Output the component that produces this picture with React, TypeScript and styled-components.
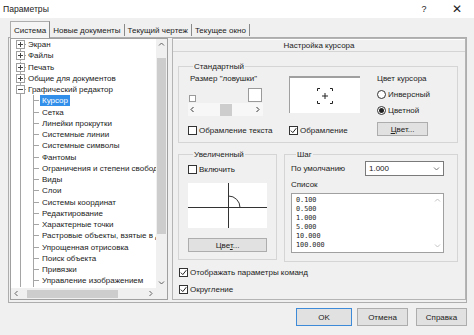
import React from "react";
import styled, { createGlobalStyle } from "styled-components";

const GlobalStyle = createGlobalStyle`
  html, body {
    margin: 0;
    padding: 0;
    background: #f0f0f0;
  }
  body {
    font-family: "Liberation Sans", Arial, sans-serif;
    font-size: 8px;
    color: #222;
  }
`;

const Window = styled.div`
  width: 474px;
  height: 335px;
  display: flex;
  flex-direction: column;
  background: #f0f0f0;
  overflow: hidden;
`;

const TitleBar = styled.div`
  height: 18px;
  flex: none;
  background: #fff;
  display: flex;
  align-items: center;
  padding-left: 3px;
  font-size: 8.6px;
`;

const TitleText = styled.div`
  flex: 1;
`;

const TitleButton = styled.div<{ $w: number }>`
  width: ${({ $w }) => $w}px;
  text-align: center;
  font-size: ${({ $w }) => ($w > 32 ? 12 : 9)}px;
  color: #222;
`;

const Body = styled.div`
  flex: 1;
  display: flex;
  flex-direction: column;
  padding: 3px 7px 0 8px;
`;

const Tabs = styled.div`
  height: 16px;
  display: flex;
  align-items: stretch;
  padding-left: 2px;
`;

const Tab = styled.div<{ $active?: boolean }>`
  display: flex;
  align-items: center;
  padding: 0 3px;
  margin-top: ${({ $active }) => ($active ? 0 : 3)}px;
  margin-bottom: ${({ $active }) => ($active ? -1 : 1)}px;
  border-right: 1px solid #8a8a8a;
  border-left: ${({ $active }) => ($active ? "1px solid #adadad" : "none")};
  border-top: ${({ $active }) => ($active ? "1px solid #adadad" : "none")};
  background: ${({ $active }) => ($active ? "#f5f5f5" : "transparent")};
  position: relative;
  z-index: ${({ $active }) => ($active ? 1 : 0)};
`;

const TabPage = styled.div`
  height: 266px;
  box-sizing: border-box;
  border: 1px solid #adadad;
  display: flex;
  gap: 4px;
  padding: 0 0 2px 1px;
`;

const TreeBox = styled.div`
  width: 158px;
  box-sizing: border-box;
  border: 1px solid #a0a0a0;
  background: #fff;
  display: grid;
  grid-template-columns: 1fr 11px;
  grid-template-rows: 1fr 11px;
  overflow: hidden;
`;

const TreeList = styled.div`
  overflow: hidden;
`;

const TreeRow = styled.div`
  height: 11.25px;
  display: flex;
  align-items: center;
  white-space: nowrap;
`;

const line = "linear-gradient(#a5a5a5, #a5a5a5)";

const RootConnector = styled.span<{ $first?: boolean }>`
  width: 15px;
  height: 100%;
  flex: none;
  display: flex;
  align-items: center;
  background-image: ${line}, ${line};
  background-repeat: no-repeat;
  background-size: 1px ${({ $first }) => ($first ? "50%" : "100%")}, 6px 1px;
  background-position: 9px 100%, 9px 50%;
`;

const ChildConnector = styled.span`
  width: 29px;
  height: 100%;
  flex: none;
  background-image: ${line}, ${line}, ${line};
  background-repeat: no-repeat;
  background-size: 1px 100%, 1px 100%, 6px 1px;
  background-position: 9px 0, 22px 0, 22px 50%;
`;

const TreeLabel = styled.span<{ $selected?: boolean }>`
  padding: 0 2px;
  line-height: 11px;
  height: 11px;
  background: ${({ $selected }) => ($selected ? "#3390ea" : "transparent")};
  color: ${({ $selected }) => ($selected ? "#fff" : "#222")};
`;

const ExpanderBox = styled.span`
  margin-left: 5px;
  display: flex;
`;

const VScroll = styled.div`
  background: #f0f0f0;
  display: flex;
  flex-direction: column;
  align-items: center;
`;

const HScroll = styled.div`
  background: #f0f0f0;
  display: flex;
  align-items: center;
`;

const ArrowCell = styled.div<{ $size: number }>`
  width: ${({ $size }) => $size}px;
  height: ${({ $size }) => $size}px;
  flex: none;
  display: flex;
  align-items: center;
  justify-content: center;
`;

const VTrack = styled.div`
  flex: 1;
  width: 100%;
  display: flex;
  justify-content: center;
`;

const VThumb = styled.div`
  width: 9px;
  height: 176px;
  margin-top: 8px;
  background: #cdcdcd;
`;

const HTrack = styled.div`
  flex: 1;
  height: 100%;
  display: flex;
  align-items: center;
`;

const HThumb = styled.div`
  height: 8px;
  width: 91px;
  margin-left: 5px;
  background: #cdcdcd;
`;

const Corner = styled.div`
  background: #f0f0f0;
`;

const RightPanel = styled.div`
  flex: 1;
  box-sizing: border-box;
  border: 1px solid #b4b4b4;
  display: flex;
  flex-direction: column;
`;

const PanelHeader = styled.div`
  height: 12px;
  display: flex;
  align-items: center;
  justify-content: center;
  border-bottom: 1px solid #d4d4d4;
  box-shadow: inset 0 1px 0 #fff;
`;

const PanelContent = styled.div`
  flex: 1;
  display: flex;
  flex-direction: column;
  padding: 9px 7px 0 5px;
`;

const Group = styled.fieldset`
  margin: 0;
  padding: 0 0 0 9px;
  border: 1px solid #d5d5d5;
  min-width: 0;
`;

const GroupTitle = styled.legend`
  padding: 0 1px;
  margin-left: 5px;
  line-height: 11px;
`;

const StandardGrid = styled.div`
  display: grid;
  grid-template-columns: 101px 88px 1fr;
  grid-template-rows: 42px 12px;
  row-gap: 10px;
  padding-top: 2px;
  height: 68px;
`;

const Cell = styled.div<{ $col: number; $row: number; $span?: number }>`
  grid-column: ${({ $col }) => $col};
  grid-row: ${({ $row, $span }) => `${$row} / span ${$span ?? 1}`};
  display: flex;
  flex-direction: column;
  gap: ${({ $span }) => ($span ? 7 : 0)}px;
`;

const SmallLabel = styled.div<{ $indent?: number }>`
  line-height: 9px;
  padding-left: ${({ $indent }) => $indent ?? 0}px;
`;

const SizeRow = styled.div`
  width: 75px;
  height: 14px;
  margin-top: 5px;
  display: flex;
  align-items: flex-end;
  justify-content: space-between;
  padding: 0 1px;
  box-sizing: border-box;
`;

const SizeSquare = styled.div<{ $size: number }>`
  width: ${({ $size }) => $size}px;
  height: ${({ $size }) => $size}px;
  box-sizing: border-box;
  border: 1px solid #9a9a9a;
  background: #fff;
`;

const Slider = styled.div`
  width: 75px;
  height: 13px;
  margin-top: 1px;
  display: flex;
  align-items: center;
  background: #f7f7f7;
`;

const SliderThumb = styled.div`
  width: 12px;
  height: 12px;
  margin: 0 21px 0 23px;
  background: #cdcdcd;
`;

const Preview = styled.div`
  width: 71px;
  height: 37px;
  margin-top: 2px;
  box-sizing: border-box;
  background: #fff;
  border-top: 2px solid #a0a0a0;
  border-left: 1px solid #a0a0a0;
  display: flex;
  align-items: center;
  justify-content: center;
`;

const CheckRow = styled.label`
  display: flex;
  align-items: center;
  gap: 2px;
  line-height: 9px;
  white-space: nowrap;
`;

const CheckBox = styled.span`
  width: 9px;
  height: 9px;
  box-sizing: border-box;
  border: 1px solid #333;
  background: #fff;
  display: flex;
  align-items: center;
  justify-content: center;
  flex: none;
`;

const Radio = styled.span<{ $on?: boolean }>`
  width: 9px;
  height: 9px;
  box-sizing: border-box;
  border: 1px solid #333;
  border-radius: 50%;
  background: #fff;
  flex: none;
  display: flex;
  align-items: center;
  justify-content: center;
  &::after {
    content: "";
    width: 5px;
    height: 5px;
    border-radius: 50%;
    background: ${({ $on }) => ($on ? "#222" : "transparent")};
  }
`;

const Button = styled.div<{ $w: number; $primary?: boolean }>`
  width: ${({ $w }) => $w}px;
  height: 14px;
  box-sizing: border-box;
  border: 1px solid ${({ $primary }) => ($primary ? "#3c8ad8" : "#adadad")};
  background: #e1e1e1;
  display: flex;
  align-items: center;
  justify-content: center;
  line-height: 9px;
`;

const GroupsRow = styled.div`
  display: flex;
  gap: 7px;
  margin-top: 6px;
`;

const ZoomGroup = styled(Group)`
  width: 99px;
  box-sizing: border-box;
  height: 111px;
`;

const StepGroup = styled(Group)`
  flex: 1;
  height: 111px;
  padding: 0 13px 0 6px;
`;

const ZoomBody = styled.div`
  display: flex;
  flex-direction: column;
  padding-top: 5px;
`;

const DrawingBox = styled.div`
  width: 79px;
  height: 45px;
  margin: 9px 0 10px;
  background: #fff;
  display: flex;
`;

const StepRow = styled.div`
  display: flex;
  align-items: center;
  justify-content: space-between;
  margin-top: 1px;
`;

const Dropdown = styled.div`
  width: 79px;
  height: 15px;
  box-sizing: border-box;
  border: 1px solid #7a7a7a;
  background: #fff;
  display: flex;
  align-items: center;
  padding-left: 3px;
`;

const DropValue = styled.span`
  flex: 1;
`;

const ListLabel = styled(SmallLabel)`
  margin-top: 4px;
`;

const ListBox = styled.div`
  height: 60px;
  margin-top: 4px;
  box-sizing: border-box;
  border: 1px solid #a0a0a0;
  background: #fff;
  display: flex;
`;

const ListItems = styled.div`
  flex: 1;
  padding: 2px 0 0 4px;
  font-family: "DejaVu Sans Mono", "Liberation Mono", monospace;
  font-size: 6.8px;
  line-height: 9px;
`;

const ListScroll = styled.div`
  width: 11px;
  display: flex;
  flex-direction: column;
  justify-content: space-between;
  align-items: center;
  padding: 3px 0;
`;

const BottomChecks = styled.div`
  display: flex;
  flex-direction: column;
  gap: 8px;
  margin-top: 6px;
  padding-left: 1px;
`;

const ButtonRow = styled.div`
  display: flex;
  justify-content: flex-end;
  gap: 5px;
  margin-top: 5px;
  & > :last-child {
    margin-left: 3px;
  }
`;

const DialogButton = styled(Button)`
  height: 18px;
`;

type Dir = "up" | "down" | "left" | "right";

const chevronPaths: Record<Dir, string> = {
  up: "M1 4.5 L3.5 2 L6 4.5",
  down: "M1 2.5 L3.5 5 L6 2.5",
  left: "M4.5 1 L2 3.5 L4.5 6",
  right: "M2.5 1 L5 3.5 L2.5 6",
};

const Chevron = ({ dir, color = "#606060" }: { dir: Dir; color?: string }) => (
  <svg width="7" height="7" viewBox="0 0 7 7">
    <path d={chevronPaths[dir]} fill="none" stroke={color} strokeWidth="1" />
  </svg>
);

const Expander = ({ open }: { open?: boolean }) => (
  <svg width="9" height="9" viewBox="0 0 9 9">
    <rect x="0.5" y="0.5" width="8" height="8" fill="#fff" stroke="#a0a0a0" />
    <path d="M2 4.5 H7" stroke="#444" />
    {!open && <path d="M4.5 2 V7" stroke="#444" />}
  </svg>
);

const Tick = () => (
  <svg width="7" height="7" viewBox="0 0 7 7">
    <path d="M0.8 3.6 L2.8 5.6 L6.3 1.2" fill="none" stroke="#222" strokeWidth="1" />
  </svg>
);

const Check = ({ checked, children }: { checked?: boolean; children: React.ReactNode }) => (
  <CheckRow>
    <CheckBox>{checked && <Tick />}</CheckBox>
    <span>{children}</span>
  </CheckRow>
);

const Crosshair = () => (
  <svg width="16" height="16" viewBox="0 0 16 16">
    <path
      d="M0.5 3 V0.5 H3 M13 0.5 H15.5 V3 M15.5 13 V15.5 H13 M3 15.5 H0.5 V13 M8 5 V11 M5 8 H11"
      fill="none"
      stroke="#222"
      strokeWidth="1"
    />
  </svg>
);

const ZoomDrawing = () => (
  <svg width="79" height="45" viewBox="0 0 79 45">
    <path d="M40.5 0 V45 M0 24.5 H79" stroke="#333" strokeWidth="1" />
    <path d="M40.5 13 A11.5 11.5 0 0 1 52 24.5" fill="none" stroke="#333" strokeWidth="1" />
  </svg>
);

const rootItems = ["Экран", "Файлы", "Печать", "Общие для документов"];

const childItems = [
  "Курсор",
  "Сетка",
  "Линейки прокрутки",
  "Системные линии",
  "Системные символы",
  "Фантомы",
  "Ограничения и степени свободы",
  "Виды",
  "Слои",
  "Системы координат",
  "Редактирование",
  "Характерные точки",
  "Растровые объекты, взятые в документ",
  "Упрощенная отрисовка",
  "Поиск объекта",
  "Привязки",
  "Управление изображением",
];

const stepValues = ["0.100", "0.500", "1.000", "5.000", "10.000", "100.000"];

const tabs = ["Система", "Новые документы", "Текущий чертеж", "Текущее окно"];

export default function App() {
  return (
    <Window>
      <GlobalStyle />
      <TitleBar>
        <TitleText>Параметры</TitleText>
        <TitleButton $w={32}>?</TitleButton>
        <TitleButton $w={34}>✕</TitleButton>
      </TitleBar>
      <Body>
        <Tabs>
          {tabs.map((t, i) => (
            <Tab key={t} $active={i === 0}>
              {t}
            </Tab>
          ))}
        </Tabs>
        <TabPage>
          <TreeBox>
            <TreeList>
              {rootItems.map((item, i) => (
                <TreeRow key={item}>
                  <RootConnector $first={i === 0}>
                    <ExpanderBox>
                      <Expander />
                    </ExpanderBox>
                  </RootConnector>
                  <TreeLabel>{item}</TreeLabel>
                </TreeRow>
              ))}
              <TreeRow>
                <RootConnector>
                  <ExpanderBox>
                    <Expander open />
                  </ExpanderBox>
                </RootConnector>
                <TreeLabel>Графический редактор</TreeLabel>
              </TreeRow>
              {childItems.map((item, i) => (
                <TreeRow key={item}>
                  <ChildConnector />
                  <TreeLabel $selected={i === 0}>{item}</TreeLabel>
                </TreeRow>
              ))}
            </TreeList>
            <VScroll>
              <ArrowCell $size={11}>
                <Chevron dir="up" />
              </ArrowCell>
              <VTrack>
                <VThumb />
              </VTrack>
              <ArrowCell $size={11}>
                <Chevron dir="down" />
              </ArrowCell>
            </VScroll>
            <HScroll>
              <ArrowCell $size={11}>
                <Chevron dir="left" />
              </ArrowCell>
              <HTrack>
                <HThumb />
              </HTrack>
              <ArrowCell $size={11}>
                <Chevron dir="right" />
              </ArrowCell>
            </HScroll>
            <Corner />
          </TreeBox>

          <RightPanel>
            <PanelHeader>Настройка курсора</PanelHeader>
            <PanelContent>
              <Group>
                <GroupTitle>Стандартный</GroupTitle>
                <StandardGrid>
                  <Cell $col={1} $row={1}>
                    <SmallLabel $indent={2}>Размер "ловушки"</SmallLabel>
                    <SizeRow>
                      <SizeSquare $size={7} />
                      <SizeSquare $size={14} />
                    </SizeRow>
                    <Slider>
                      <ArrowCell $size={9}>
                        <Chevron dir="left" color="#333" />
                      </ArrowCell>
                      <SliderThumb />
                      <ArrowCell $size={9}>
                        <Chevron dir="right" color="#333" />
                      </ArrowCell>
                    </Slider>
                  </Cell>
                  <Cell $col={2} $row={1}>
                    <Preview>
                      <Crosshair />
                    </Preview>
                  </Cell>
                  <Cell $col={3} $row={1} $span={2}>
                    <SmallLabel>Цвет курсора</SmallLabel>
                    <CheckRow>
                      <Radio />
                      <span>Инверсный</span>
                    </CheckRow>
                    <CheckRow>
                      <Radio $on />
                      <span>Цветной</span>
                    </CheckRow>
                    <Button $w={51}>
                      <span>
                        <u>Ц</u>вет...
                      </span>
                    </Button>
                  </Cell>
                  <Cell $col={1} $row={2}>
                    <Check>Обрамление текста</Check>
                  </Cell>
                  <Cell $col={2} $row={2}>
                    <Check checked>Обрамление</Check>
                  </Cell>
                </StandardGrid>
              </Group>

              <GroupsRow>
                <ZoomGroup>
                  <GroupTitle>Увеличенный</GroupTitle>
                  <ZoomBody>
                    <Check>Включить</Check>
                    <DrawingBox>
                      <ZoomDrawing />
                    </DrawingBox>
                    <Button $w={79}>
                      <span>
                        Цве<u>т</u>...
                      </span>
                    </Button>
                  </ZoomBody>
                </ZoomGroup>
                <StepGroup>
                  <GroupTitle>Шаг</GroupTitle>
                  <StepRow>
                    <span>По умолчанию</span>
                    <Dropdown>
                      <DropValue>1.000</DropValue>
                      <ArrowCell $size={13}>
                        <Chevron dir="down" color="#777" />
                      </ArrowCell>
                    </Dropdown>
                  </StepRow>
                  <ListLabel>Список</ListLabel>
                  <ListBox>
                    <ListItems>
                      {stepValues.map((v) => (
                        <div key={v}>{v}</div>
                      ))}
                    </ListItems>
                    <ListScroll>
                      <Chevron dir="up" color="#c4c4c4" />
                      <Chevron dir="down" color="#c4c4c4" />
                    </ListScroll>
                  </ListBox>
                </StepGroup>
              </GroupsRow>

              <BottomChecks>
                <Check checked>Отображать параметры команд</Check>
                <Check checked>Округление</Check>
              </BottomChecks>
            </PanelContent>
          </RightPanel>
        </TabPage>
        <ButtonRow>
          <DialogButton $w={56} $primary>
            OK
          </DialogButton>
          <DialogButton $w={51}>Отмена</DialogButton>
          <DialogButton $w={51}>Справка</DialogButton>
        </ButtonRow>
      </Body>
    </Window>
  );
}
